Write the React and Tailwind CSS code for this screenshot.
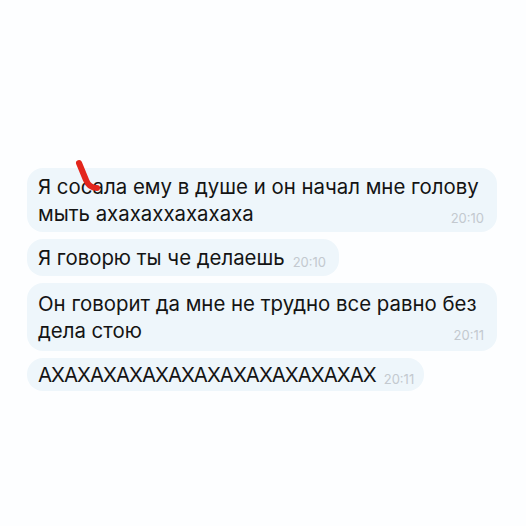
import React from 'react';

/**
 * Chat screenshot: four incoming messages with a red scribble on top
 */
const font = { fontFamily: 'Inter, "Noto Sans", sans-serif' };

const Time = ({ children }) => (
  <span className="ml-[8px] mb-[2px] shrink-0 text-[13px] leading-none text-[#c3c9cf]">
    {children}
  </span>
);

const App = () => {
  return (
    <div
      className="relative h-[526px] w-[526px] bg-[#fdfeff] pt-[168px] pl-[27px] text-[20.4px] leading-[27px] text-[#141414]"
      style={font}
    >
      <div className="flex flex-col items-start gap-[7px]">
        {/* Message 1 */}
        <div className="w-[470px] rounded-[16px] bg-[#eef6fb] py-[5px] pl-[11px] pr-[13px]">
          <div className="whitespace-nowrap">Я сосала ему в душе и он начал мне голову</div>
          <div className="flex items-end justify-between">
            <span>мыть ахахаххахахаха</span>
            <Time>20:10</Time>
          </div>
        </div>

        {/* Message 2 */}
        <div className="flex items-end rounded-[16px] bg-[#eef6fb] py-[5px] pl-[11px] pr-[13px]">
          <span className="whitespace-nowrap">Я говорю ты че делаешь</span>
          <Time>20:10</Time>
        </div>

        {/* Message 3 */}
        <div className="w-[470px] rounded-[16px] bg-[#eef6fb] py-[7px] pl-[11px] pr-[13px]">
          <div className="whitespace-nowrap">Он говорит да мне не трудно все равно без</div>
          <div className="flex items-end justify-between">
            <span>дела стою</span>
            <Time>20:11</Time>
          </div>
        </div>

        {/* Message 4 */}
        <div className="flex items-end rounded-[16px] bg-[#eef6fb] py-[3px] pl-[11px] pr-[10px]">
          <span className="whitespace-nowrap tracking-[-1px]">АХАХАХАХАХАХАХАХАХАХАХАХАХ</span>
          <Time>20:11</Time>
        </div>
      </div>

      {/* Red scribble */}
      <svg className="absolute left-[70px] top-[155px]" width="40" height="45" viewBox="70 155 40 45">
        <path
          d="M79 163 L86 180 Q89 188 97 188"
          fill="none"
          stroke="#e3261c"
          strokeWidth="6"
          strokeLinecap="round"
          strokeLinejoin="round"
        />
      </svg>
    </div>
  );
};

export default App;
